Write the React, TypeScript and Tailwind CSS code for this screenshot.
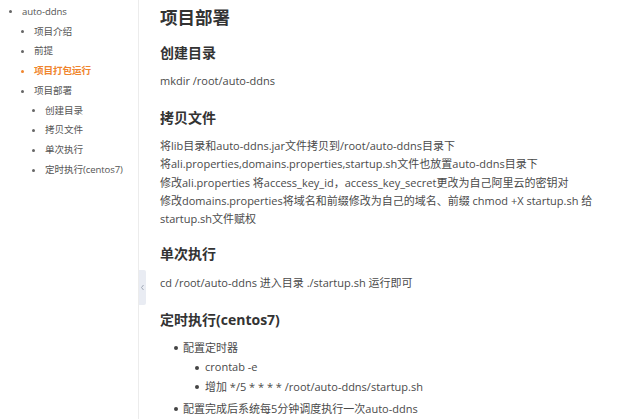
import React from "react";

const font = { fontFamily: '"Open Sans", "Noto Sans CJK SC", sans-serif' };

function NavItem({ level, text, active }: { level: number; text: string; active?: boolean }) {
  const pl = level === 0 ? "pl-[9px]" : level === 1 ? "pl-[21px]" : "pl-[32px]";
  return (
    <div className={`flex items-center h-[19.8px] ${pl}`}>
      <span className={`inline-block w-[3px] h-[3px] rounded-full mr-[10px] ${active ? "bg-[#f0852d]" : "bg-[#666]"}`} />
      <span className={`text-[9.6px] tracking-[-0.1px] ${active ? "text-[#f0852d] font-bold" : "text-[#555]"}`}>{text}</span>
    </div>
  );
}

export default function App() {
  return (
    <div className="flex w-[640px] h-[419px] overflow-hidden bg-white relative" style={font}>
      <div className="w-[139px] shrink-0 border-r border-[#ececec] pt-[2px]">
        <NavItem level={0} text="auto-ddns" />
        <NavItem level={1} text="项目介绍" />
        <NavItem level={1} text="前提" />
        <NavItem level={1} text="项目打包运行" active />
        <NavItem level={1} text="项目部署" />
        <NavItem level={2} text="创建目录" />
        <NavItem level={2} text="拷贝文件" />
        <NavItem level={2} text="单次执行" />
        <NavItem level={2} text="定时执行(centos7)" />
      </div>
      <div className="absolute left-[139px] top-[270px] w-[7px] h-[35px] bg-[#e9ecf3] flex items-center justify-center rounded-r-[2px]">
        <svg width="5" height="7" viewBox="0 0 5 7"><path d="M3.5 1 L1.5 3.5 L3.5 6" fill="none" stroke="#9aa2b0" strokeWidth="0.9" /></svg>
      </div>
      <div className="pl-[21px] text-[#4a4a4a]">
        <h1 className="mt-[5px] leading-[24px] text-[17.5px] font-bold text-[#333]">项目部署</h1>
        <h2 className="mt-[14px] leading-[20px] text-[14px] font-bold text-[#333]">创建目录</h2>
        <p className="mt-[9px] leading-[18px] text-[11px]">mkdir /root/auto-ddns</p>
        <h2 className="mt-[18px] leading-[20px] text-[14px] font-bold text-[#333]">拷贝文件</h2>
        <p className="mt-[9px] leading-[18.3px] text-[11px]">
          将lib目录和auto-ddns.jar文件拷贝到/root/auto-ddns目录下<br />
          将ali.properties,domains.properties,startup.sh文件也放置auto-ddns目录下<br />
          修改ali.properties 将access_key_id，access_key_secret更改为自己阿里云的密钥对<br />
          修改domains.properties将域名和前缀修改为自己的域名、前缀 chmod +X startup.sh 给<br />
          startup.sh文件赋权
        </p>
        <h2 className="mt-[16px] leading-[20px] text-[14px] font-bold text-[#333]">单次执行</h2>
        <p className="mt-[10px] leading-[18px] text-[11px]">cd /root/auto-ddns 进入目录 ./startup.sh 运行即可</p>
        <h2 className="mt-[18px] leading-[20px] text-[14px] font-bold text-[#333]">定时执行(centos7)</h2>
        <div className="mt-[8px] text-[11px]">
          <div className="flex items-center h-[19.5px] pl-[14px]"><span className="w-[4px] h-[4px] rounded-full bg-[#444] mr-[5px]" />配置定时器</div>
          <div className="flex items-center h-[19.5px] pl-[35px]"><span className="w-[4px] h-[4px] rounded-full bg-[#444] mr-[6px]" />crontab -e</div>
          <div className="flex items-center h-[19.5px] pl-[35px]"><span className="w-[4px] h-[4px] rounded-full bg-[#444] mr-[6px]" />增加 */5 * * * * /root/auto-ddns/startup.sh</div>
          <div className="flex items-center h-[19.5px] mt-[2.5px] pl-[14px]"><span className="w-[4px] h-[4px] rounded-full bg-[#444] mr-[5px]" />配置完成后系统每5分钟调度执行一次auto-ddns</div>
        </div>
      </div>
    </div>
  );
}
